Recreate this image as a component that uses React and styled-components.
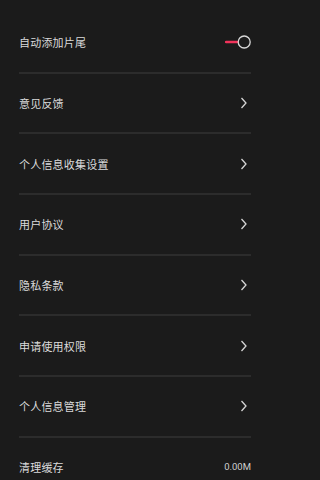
import React from "react";
import styled, { createGlobalStyle } from "styled-components";

const GlobalStyle = createGlobalStyle`
  html, body {
    margin: 0;
    padding: 0;
    background: #1b1b1b;
  }
  body {
    font-family: "Noto Sans CJK SC", "Noto Sans", sans-serif;
  }
`;

const Page = styled.div`
  width: 270px;
  height: 480px;
  overflow: hidden;
  background: #1b1b1b;
  padding-top: 13px;
  box-sizing: border-box;
`;

const List = styled.div`
  display: flex;
  flex-direction: column;
  margin: 0 19px;
`;

const Row = styled.div`
  height: 58.67px;
  display: flex;
  align-items: center;
  justify-content: space-between;
  border-bottom: ${(p) => (p.last ? "none" : "2px solid #2c2c2c")};
`;

const Label = styled.span`
  font-size: 11px;
  color: #dadada;
  letter-spacing: 0.2px;
`;

const Value = styled.span`
  font-family: "Roboto", "Noto Sans", sans-serif;
  font-size: 9.5px;
  color: #cfcfcf;
`;

function Toggle() {
  return (
    <svg width="26" height="14" viewBox="0 0 26 14">
      <line x1="1" y1="7" x2="12.5" y2="7" stroke="#f0335a" strokeWidth="2.4" strokeLinecap="round" />
      <circle cx="19.2" cy="7" r="6" fill="none" stroke="#d8d8d8" strokeWidth="1.3" />
    </svg>
  );
}

function Chevron() {
  return (
    <svg width="8" height="12" viewBox="0 0 8 12" style={{ marginRight: 3 }}>
      <polyline points="1.5,1 6,6 1.5,11" fill="none" stroke="#d6d6d6" strokeWidth="1.3" />
    </svg>
  );
}

const items = [
  { label: "意见反馈" },
  { label: "个人信息收集设置" },
  { label: "用户协议" },
  { label: "隐私条款" },
  { label: "申请使用权限" },
  { label: "个人信息管理" },
];

export default function App() {
  return (
    <Page>
      <GlobalStyle />
      <List>
        <Row>
          <Label>自动添加片尾</Label>
          <Toggle />
        </Row>
        {items.map((it) => (
          <Row key={it.label}>
            <Label>{it.label}</Label>
            <Chevron />
          </Row>
        ))}
        <Row last>
          <Label>清理缓存</Label>
          <Value>0.00M</Value>
        </Row>
      </List>
    </Page>
  );
}
